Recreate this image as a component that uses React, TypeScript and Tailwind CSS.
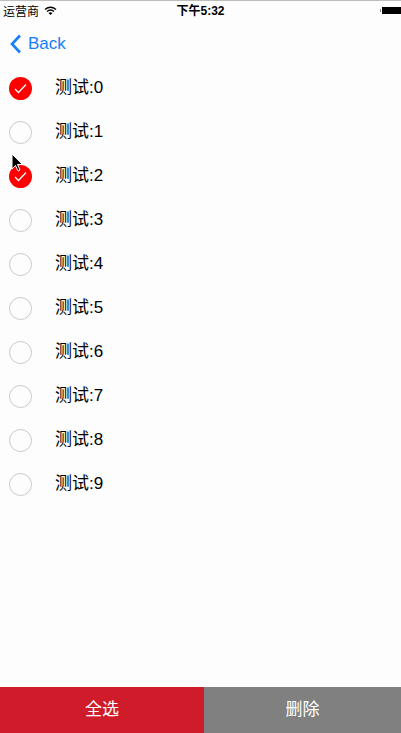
import React, { useState } from "react";

const font = { fontFamily: '"Liberation Sans", "Noto Sans CJK SC", sans-serif' };

function Check({ on }: { on: boolean }) {
  if (on) {
    return (
      <div className="w-[23px] h-[23px] rounded-full bg-[#fe0000] flex items-center justify-center">
        <svg width="15" height="15" viewBox="0 0 15 15">
          <path d="M2 8 L5.5 11.5 L13 3.5" fill="none" stroke="white" strokeWidth="1.3" />
        </svg>
      </div>
    );
  }
  return <div className="w-[23px] h-[23px] rounded-full border border-[#c8c8c8]" />;
}

export default function App() {
  const [sel, setSel] = useState<boolean[]>([true, false, true, false, false, false, false, false, false, false]);
  return (
    <div className="relative w-[401px] h-[733px] bg-[#fdfdfd] flex flex-col" style={font}>
      <div className="h-[1px] bg-[#bdbdbd]" />
      <div className="h-[19px] flex items-center px-[3px] text-[12px] text-black relative">
        <span style={{ fontFamily: '"Noto Sans CJK SC", sans-serif' }}>运营商</span>
        <svg className="ml-[5px]" width="13" height="10" viewBox="0 0 13 10">
          <path d="M1 3.5 Q6.5 -1 12 3.5" fill="none" stroke="black" strokeWidth="1.4" />
          <path d="M3 5.5 Q6.5 2.5 10 5.5" fill="none" stroke="black" strokeWidth="1.4" />
          <path d="M6.5 9 L4.5 7 Q6.5 5.5 8.5 7 Z" fill="black" />
        </svg>
        <span className="absolute left-0 right-0 text-center font-semibold pointer-events-none">下午5:32</span>
        <div className="ml-auto flex items-center mr-[-3px]">
          <div className="w-[1px] h-[3px] bg-[#888] mr-[1px]" />
          <div className="w-[19px] h-[7px] bg-black" />
        </div>
      </div>
      <div className="h-[46px] flex items-center pl-[10px] pt-[2px]">
        <svg width="12" height="20" viewBox="0 0 12 20">
          <path d="M10 1.5 L2 10 L10 18.5" fill="none" stroke="#157efb" strokeWidth="2.6" />
        </svg>
        <span className="ml-[6px] text-[17px] text-[#157efb]">Back</span>
      </div>
      <div className="flex flex-col">
        {sel.map((s, i) => (
          <div
            key={i}
            className="h-[44px] flex items-center pl-[9px] cursor-pointer"
            onClick={() => setSel(sel.map((v, j) => (j === i ? !v : v)))}
          >
            <Check on={s} />
            <span className="ml-[23px] text-[17px] text-black">测试:{i}</span>
          </div>
        ))}
      </div>
      <div className="mt-auto h-[46px] flex text-white text-[17px]">
        <button className="w-[204px] bg-[#d01b2b] flex items-center justify-center">全选</button>
        <button className="flex-1 bg-[#808080] flex items-center justify-center">删除</button>
      </div>
      <svg className="absolute left-[11px] top-[153px]" width="14" height="20" viewBox="0 0 14 20">
        <path d="M1 1 L1 16 L4.5 12.5 L7 18 L9 17 L6.5 11.5 L11.5 11.5 Z" fill="black" stroke="white" strokeWidth="1" />
      </svg>
    </div>
  );
}
